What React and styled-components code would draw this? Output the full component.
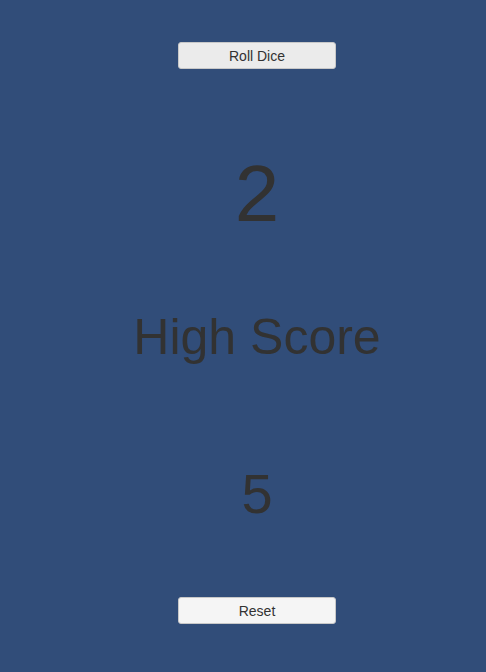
import styled, { createGlobalStyle } from 'styled-components'

const GlobalStyle = createGlobalStyle`
  html, body {
    margin: 0;
    padding: 0;
    background: #314d79;
  }
  body {
    font-family: "Liberation Sans", Arial, sans-serif;
  }
`

const Screen = styled.div`
  width: 486px;
  height: 672px;
  box-sizing: border-box;
  padding: 42px 0 0 28px;
  display: flex;
  flex-direction: column;
  align-items: center;
  background: #314d79;
  color: #323232;
`

const Button = styled.button`
  width: 158px;
  height: 27px;
  padding: 0;
  margin-top: ${(p) => p.$top || 0}px;
  border: 1px solid #c8c8c8;
  border-radius: 3px;
  background: ${(p) => (p.$light ? '#f5f5f5' : '#ebebeb')};
  color: #323232;
  font-family: "Liberation Sans", Arial, sans-serif;
  font-size: 14px;
  cursor: pointer;
`

const Big = styled.div`
  font-size: ${(p) => p.$size}px;
  line-height: 1;
  height: ${(p) => p.$size}px;
  margin-top: ${(p) => p.$top}px;
  text-align: center;
  white-space: nowrap;
`

export default function App() {
  return (
    <>
      <GlobalStyle />
      <Screen>
        <Button>Roll Dice</Button>
        <Big $size={80} $top={85}>2</Big>
        <Big $size={50} $top={78}>High Score</Big>
        <Big $size={56} $top={104}>5</Big>
        <Button $light $top={75}>Reset</Button>
      </Screen>
    </>
  )
}
